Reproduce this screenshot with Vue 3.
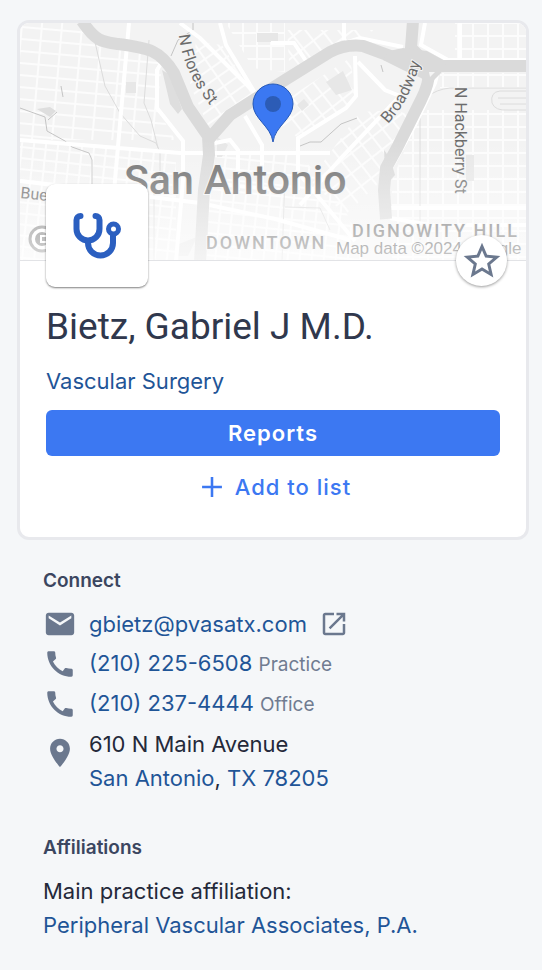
<template>
    <main class="profile">
        <section class="card">
            <div class="map">
                <svg
                    class="map-image"
                    viewBox="20 23 506 237"
                    preserveAspectRatio="xMidYMid slice"
                    role="img"
                    aria-label="Map of San Antonio"
                >
                    <defs>
                        <pattern id="grid-west" width="20" height="12" patternUnits="userSpaceOnUse" patternTransform="rotate(5)">
                            <path d="M0 1H20M4 0V12" class="grid-line" />
                        </pattern>
                        <pattern id="grid-dense" width="12" height="11" patternUnits="userSpaceOnUse" patternTransform="rotate(6)">
                            <path d="M0 1H12M1 0V11" class="grid-line" />
                        </pattern>
                        <pattern id="grid-north" width="14" height="13" patternUnits="userSpaceOnUse">
                            <path d="M0 7H14M5 0V13" class="grid-line" />
                        </pattern>
                        <pattern id="grid-flores" width="19" height="11" patternUnits="userSpaceOnUse" patternTransform="rotate(-35)">
                            <path d="M0 1H19M1 0V11" class="grid-line" />
                        </pattern>
                        <pattern id="grid-center" width="13" height="16" patternUnits="userSpaceOnUse" patternTransform="rotate(-38)">
                            <path d="M0 1H13M1 0V16" class="grid-line" />
                        </pattern>
                        <pattern id="grid-east" width="15" height="13" patternUnits="userSpaceOnUse">
                            <path d="M0 10H15M8 0V13" class="grid-line" />
                        </pattern>
                        <linearGradient id="fade" x1="0" y1="0" x2="0" y2="1">
                            <stop offset="0" stop-color="#fff" stop-opacity="0" />
                            <stop offset="1" stop-color="#fff" stop-opacity="0.7" />
                        </linearGradient>
                    </defs>

                    <rect x="20" y="23" width="506" height="238" fill="#f3f3f3" />

                    <!-- 街区网格 -->
                    <path d="M20 23H80L100 45L165 58L160 78L158 110L175 140H20Z" fill="url(#grid-west)" />
                    <path d="M20 142L176 154V261H20Z" fill="url(#grid-dense)" />
                    <path d="M226 23H285V72L253 68Z" fill="url(#grid-north)" />
                    <path d="M196 42L222 45L253 94L210 130L190 85Z" fill="url(#grid-flores)" />
                    <path d="M287 30H375L345 43L290 78ZM290 97L350 58L356 96L346 108L298 138L282 125ZM360 112L395 110L410 115L382 180L345 215L310 180Z" fill="url(#grid-center)" />
                    <path d="M210 155H300L340 200L370 261H207Z" fill="url(#grid-dense)" />
                    <path d="M455 23H526V62H455ZM440 73H526V88H440ZM422 110H526V261H392V180Z" fill="url(#grid-east)" />

                    <!-- 建筑和公园 -->
                    <path d="M326 82L343 71L352 90L336 95ZM126 82H136V93H126ZM257 33H278V42H257ZM297 105L304 99L309 105L302 111ZM466 155H474V181H466ZM217 137L228 145L222 157H217ZM176 245L197 237L188 256H176Z" fill="#e7e7e7" />
                    <path d="M37 109L50 107L56 111L50 117ZM162 70L170 75L182 109L178 114L170 104Z" fill="#dedede" />

                    <!-- 铁路与河道 -->
                    <g class="rail">
                        <path d="M95 42L105 86L120 113L140 136L156 143L160 152V185" />
                        <path d="M149 40L144 103L151 120L158 148M420 240V115Q422 91 450 88H526" />
                        <path d="M526 91H500Q490 92 492 103Q495 111 508 110H526M526 98H498M526 104H500" />
                        <path d="M154 185V261M285 175L282 261M285 207L320 208L330 230" />
                    </g>
                    <g class="creek">
                        <path d="M20 108L45 117L47 131L65 141L72 147L89 153L92 160V190M48 120L57 112M61 86L63 97" />
                        <path d="M300 146L310 142H321L341 124L357 118M381 65L383 72M193 23V30L178 40L171 56" />
                    </g>

                    <!-- 主要道路 -->
                    <g class="road">
                        <path d="M129 23L115 180L109 261M20 140L180 153H330" />
                        <path d="M162 62L157 70V108L183 141V180L176 261M180 23L200 38L240 78L262 100" />
                        <path d="M220 23L226 45L255 93M271 43H294L306 61M344 23V40" />
                        <path d="M355 56L356 96L346 108L298 138V190M358 62L385 90L400 96L341 158L300 205" />
                        <path d="M20 181L200 203L275 219L350 240M207 183L280 190M296 170L355 241" />
                        <path d="M205 145L230 140L238 150V190M245 116L262 145V190" />
                        <path d="M425 23L421 45L448 60H526M438 71L435 83L415 125L390 170M391 208H526M460 20V60" />
                        <path d="M345 43L360 38L403 47M390 218L430 225H526" />
                    </g>

                    <!-- 高速公路 -->
                    <g class="highway">
                        <path d="M82 21C96 42 103 42 118 44C149 48 160 50 174 73L188 107L208 136L209 155L204 190L200 262" />
                        <path d="M208 140L230 115L255 99L285 80L330 52Q345 44 363 46L401 60L440 66H528" />
                        <path d="M413 21L411 48L430 67Q429 85 421 100L397 148L386 168L384 190L386 219" />
                    </g>
                    <path d="M389 51L403 48L427 51L447 62L441 73L430 84L421 78L403 70L383 60Z" fill="#dadada" />
                    <path d="M384 150L390 158L395 175L386 185Z" fill="#dadada" />
                    <path d="M429 72L435 72L430 77Z" fill="#f5f5f5" />

                    <!-- 地图文字 -->
                    <path id="flores-path" d="M179 35Q183 72 210 105" fill="none" />
                    <path id="broadway-path" d="M388 124Q413 97 422 55" fill="none" />
                    <text class="map-label street"><textPath href="#flores-path">N Flores St</textPath></text>
                    <text class="map-label street"><textPath href="#broadway-path">Broadway</textPath></text>
                    <text class="map-label street" transform="translate(455 87) rotate(90)">N Hackberry St</text>
                    <text class="map-label street" transform="translate(20 198) rotate(6)">Buen</text>
                    <text class="map-label city" x="124" y="194">San Antonio</text>
                    <text class="map-label district" x="206" y="249">DOWNTOWN</text>
                    <text class="map-label district" x="352" y="237">DIGNOWITY HILL</text>

                    <circle cx="42" cy="239" r="12" fill="#fff" stroke="#7d7d7d" stroke-width="3" />
                    <circle cx="42" cy="239" r="7" fill="#6f6f6f" />
                    <path d="M46 236H41V242H46" fill="none" stroke="#fff" stroke-width="2" />

                    <text class="credit" x="336" y="254">Map data ©2024 Google</text>
                    <rect x="20" y="140" width="506" height="121" fill="url(#fade)" />

                    <path
                        d="M273 142C271 126 253 119 253 104A20 20 0 0 1 293 104C293 119 275 126 273 142Z"
                        fill="#3b78f2"
                        stroke="#2659b8"
                    />
                    <circle cx="273" cy="104" r="8" fill="#2c5cb6" />
                </svg>

                <div class="specialty-badge">
                    <svg width="48" height="48" viewBox="0 0 48 48" aria-hidden="true">
                        <g fill="none" stroke="#2b5fc0" stroke-width="6" stroke-linecap="round">
                            <path d="M7.5 4a4 4 0 0 0-4 4v9a11.5 11.5 0 0 0 23 0v-9a4 4 0 0 0-4-4" />
                            <path d="M15 29v2a12.5 12.5 0 0 0 25 0v-8" />
                            <circle cx="40.5" cy="17" r="5" stroke-width="5" />
                        </g>
                    </svg>
                </div>

                <button type="button" class="favorite" aria-label="Favorite">
                    <svg width="44" height="44" viewBox="0 0 24 24" aria-hidden="true">
                        <path :d="icons.star" />
                    </svg>
                </button>
            </div>

            <div class="card-body">
                <h1>Bietz, Gabriel J M.D.</h1>
                <a class="specialty" href="#">Vascular Surgery</a>
                <button type="button" class="btn btn-primary">Reports</button>
                <button type="button" class="btn btn-text">
                    <svg width="34" height="34" viewBox="0 0 24 24" aria-hidden="true">
                        <path d="M5 12h14M12 5v14" fill="none" stroke="currentColor" stroke-width="1.8" />
                    </svg>
                    Add to list
                </button>
            </div>
        </section>

        <section class="info">
            <h2>Connect</h2>
            <ul>
                <li>
                    <svg class="icon" viewBox="0 0 24 24" aria-hidden="true"><path :d="icons.mail" /></svg>
                    <a href="mailto:gbietz@pvasatx.com">gbietz@pvasatx.com</a>
                    <a class="open-link" href="#" aria-label="Open">
                        <svg width="30" height="30" viewBox="0 0 24 24" aria-hidden="true"><path :d="icons.open" /></svg>
                    </a>
                </li>
                <li v-for="phone in phones" :key="phone.number">
                    <svg class="icon" viewBox="0 0 24 24" aria-hidden="true"><path :d="icons.phone" /></svg>
                    <span><a :href="'tel:' + phone.number">{{ phone.number }}</a> <small>{{ phone.label }}</small></span>
                </li>
                <li class="address">
                    <svg class="icon" viewBox="0 0 24 24" aria-hidden="true"><path :d="icons.place" /></svg>
                    <address>
                        610 N Main Avenue<br />
                        <a href="#">San Antonio</a>, <a href="#">TX 78205</a>
                    </address>
                </li>
            </ul>
        </section>

        <section class="info">
            <h2>Affiliations</h2>
            <p>
                Main practice affiliation:<br />
                <a href="#">Peripheral Vascular Associates, P.A.</a>
            </p>
        </section>
    </main>
</template>

<script setup>
    // 联系电话
    const phones = [
        { number: '(210) 225-6508', label: 'Practice' },
        { number: '(210) 237-4444', label: 'Office' }
    ];

    // 图标路径
    const icons = {
        star: 'M22 9.24l-7.19-.62L12 2 9.19 8.63 2 9.24l5.46 4.73L5.82 21 12 17.27 18.18 21l-1.63-7.03L22 9.24zM12 15.4l-3.76 2.27 1-4.28-3.32-2.88 4.38-.38L12 6.1l1.71 4.04 4.38.38-3.32 2.88 1 4.28L12 15.4z',
        mail: 'M20 4H4c-1.1 0-1.99.9-1.99 2L2 18c0 1.1.9 2 2 2h16c1.1 0 2-.9 2-2V6c0-1.1-.9-2-2-2zm0 4l-8 5-8-5V6l8 5 8-5v2z',
        phone: 'M20.01 15.38c-1.23 0-2.42-.2-3.53-.56-.35-.12-.74-.03-1.01.24l-1.57 1.97c-2.83-1.35-5.48-3.9-6.89-6.83l1.95-1.66c.27-.28.35-.67.24-1.02-.37-1.11-.56-2.3-.56-3.53 0-.54-.45-.99-.99-.99H4.19C3.65 3 3 3.24 3 3.99 3 13.28 10.73 21 20.01 21c.71 0 .99-.63.99-1.18v-3.45c0-.54-.45-.99-.99-.99z',
        place: 'M12 2C8.13 2 5 5.13 5 9c0 5.25 7 13 7 13s7-7.75 7-13c0-3.87-3.13-7-7-7zm0 9.5c-1.38 0-2.5-1.12-2.5-2.5s1.12-2.5 2.5-2.5 2.5 1.12 2.5 2.5-1.12 2.5-2.5 2.5z',
        open: 'M19 19H5V5h7V3H5c-1.11 0-2 .9-2 2v14c0 1.1.89 2 2 2h14c1.1 0 2-.9 2-2v-7h-2v7zM14 3v2h3.59l-9.83 9.83 1.41 1.41L19 6.41V10h2V3h-7z'
    };
</script>

<style>
    body {
        margin: 0;
        background: #f5f7f9;
    }
</style>

<style scoped>
    .profile {
        box-sizing: border-box;
        padding: 20px 13px 28px 17px;
        color: #24293a;
        font-family: Inter, "Liberation Sans", sans-serif;
        font-size: 22px;
        line-height: 34px;
    }

    .card {
        background: #fff;
        border: 3px solid #e8e9ed;
        border-radius: 12px;
    }

    .map {
        position: relative;
        border-bottom: 1px solid #e2e3e6;
    }

    .map-image {
        display: block;
        width: 100%;
        height: 237px;
        border-radius: 9px 9px 0 0;
    }

    .grid-line {
        fill: none;
        stroke: #fcfcfc;
        stroke-width: 2;
    }

    .road {
        fill: none;
        stroke: #fff;
        stroke-width: 4;
    }

    .highway {
        fill: none;
        stroke: #dadada;
        stroke-width: 12;
        stroke-linejoin: round;
    }

    .rail {
        fill: none;
        stroke: #dcdcdc;
    }

    .creek {
        fill: none;
        stroke: #c4c4c4;
    }

    .map-label {
        font-family: Roboto, sans-serif;
        fill: #6c6c6c;
        stroke: #f4f4f4;
        stroke-width: 2px;
        paint-order: stroke;
    }

    .street {
        font-size: 16px;
    }

    .city {
        font-size: 41px;
        font-weight: 500;
    }

    .district {
        font-size: 18px;
        font-weight: 500;
        letter-spacing: 2px;
        fill: #666;
    }

    .credit {
        font-family: "Liberation Sans", sans-serif;
        font-size: 17px;
        fill: #4c4c4c;
    }

    .specialty-badge {
        position: absolute;
        left: 26px;
        bottom: -27px;
        display: flex;
        align-items: center;
        justify-content: center;
        width: 102px;
        height: 103px;
        background: #fff;
        border-radius: 9px;
        box-shadow: 0 1px 2px rgba(0, 0, 0, 0.5);
    }

    .favorite {
        position: absolute;
        right: 19px;
        bottom: -26px;
        display: flex;
        align-items: center;
        justify-content: center;
        width: 51px;
        height: 51px;
        padding: 0;
        background: #fff;
        border: 0;
        border-radius: 50%;
        box-shadow: 0 1px 3px rgba(0, 0, 0, 0.4);
        fill: #6b788e;
    }

    .card-body {
        display: flex;
        flex-direction: column;
        padding: 42px 26px 26px;
    }

    h1 {
        margin: 0 0 13px;
        color: #30384d;
        font-family: Roboto, Inter, sans-serif;
        font-size: 37px;
        font-weight: 400;
        line-height: 48px;
    }

    a {
        color: #1f5597;
        text-decoration: none;
    }

    .specialty {
        align-self: flex-start;
        margin-bottom: 12px;
    }

    .btn {
        display: flex;
        align-items: center;
        justify-content: center;
        height: 46px;
        border: 0;
        border-radius: 6px;
        font-family: inherit;
        font-size: 22px;
        letter-spacing: 1px;
        cursor: pointer;
    }

    .btn-primary {
        background: #3c78f2;
        color: #fff;
        font-weight: 600;
    }

    .btn-text {
        gap: 6px;
        height: 62px;
        margin-bottom: -7px;
        background: none;
        color: #3c78f2;
        font-weight: 500;
    }

    .info {
        padding: 24px 26px 0;
    }

    .info + .info {
        padding-top: 36px;
    }

    h2 {
        margin: 0 0 6px;
        color: #3b4660;
        font-size: 19px;
        font-weight: 600;
    }

    ul {
        margin: 0;
        padding: 0;
        list-style: none;
    }

    li {
        display: flex;
        align-items: center;
        gap: 12px;
        min-height: 40px;
    }

    .icon {
        flex: none;
        width: 34px;
        height: 34px;
        fill: #6b788e;
    }

    .open-link {
        display: flex;
        fill: #6b788e;
    }

    small {
        color: #707c91;
        font-size: 19px;
    }

    .address {
        align-items: flex-start;
        padding-top: 3px;
    }

    .address .icon {
        margin-top: 9px;
    }

    address {
        font-style: normal;
    }

    p {
        margin: 9px 0 0;
    }
</style>
